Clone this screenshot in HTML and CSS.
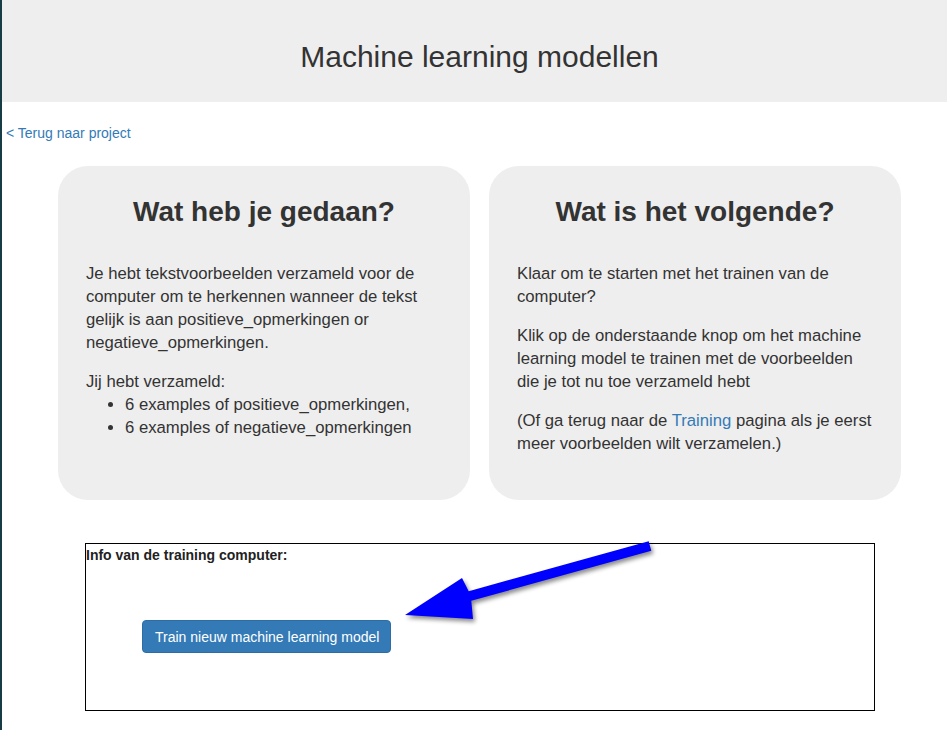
FILE: index.html
```html
<!DOCTYPE html>
<html lang="nl">
<head>
<meta charset="utf-8">
<title>Machine learning modellen</title>
<link rel="stylesheet" href="styles.css">
</head>
<body>
<header class="page-header">
  <h1 class="page-title">Machine learning modellen</h1>
</header>
<nav class="back-nav">
  <a class="back-link" href="#">&lt; Terug naar project</a>
</nav>
<main class="content">
  <section class="cards">
    <div class="card">
      <h2 class="card-title">Wat heb je gedaan?</h2>
      <p class="card-text">Je hebt tekstvoorbeelden verzameld voor de computer om te herkennen wanneer de tekst gelijk is aan positieve_opmerkingen or negatieve_opmerkingen.</p>
      <p class="card-text card-text-tight">Jij hebt verzameld:</p>
      <ul class="card-list">
        <li>6 examples of positieve_opmerkingen,</li>
        <li>6 examples of negatieve_opmerkingen</li>
      </ul>
    </div>
    <div class="card">
      <h2 class="card-title">Wat is het volgende?</h2>
      <p class="card-text">Klaar om te starten met het trainen van de computer?</p>
      <p class="card-text">Klik op de onderstaande knop om het machine learning model te trainen met de voorbeelden die je tot nu toe verzameld hebt</p>
      <p class="card-text">(Of ga terug naar de <a class="inline-link" href="#">Training</a> pagina als je eerst meer voorbeelden wilt verzamelen.)</p>
    </div>
  </section>
  <section class="info-box">
    <div class="info-label">Info van de training computer:</div>
    <div class="info-actions">
      <button class="train-btn" type="button">Train nieuw machine learning model</button>
    </div>
    <svg class="arrow" width="270" height="100" viewBox="390 530 270 100" aria-hidden="true">
      <polygon points="405,615 462,578 468.7,591.2 648.7,541.2 651.3,550.8 471.3,600.8 473,619" fill="#0000ff"/>
    </svg>
  </section>
</main>
</body>
</html>
```

FILE: styles.css
```css
html, body {
  margin: 0;
  padding: 0;
}
body {
  font-family: "Liberation Sans", Arial, Helvetica, sans-serif;
  color: #333;
  background: #fff;
  border-left: 2px solid #173c46;
  min-height: 730px;
  box-sizing: border-box;
}
.page-header {
  background: #eeeeee;
  height: 102px;
  display: flex;
  align-items: center;
  justify-content: center;
  padding-left: 10px;
  padding-top: 10px;
  box-sizing: border-box;
}
.page-title {
  margin: 0;
  font-size: 30px;
  font-weight: 400;
  line-height: 33px;
  color: #333;
}
.back-nav {
  padding: 21px 0 0 4px;
  height: 43px;
  box-sizing: border-box;
}
.back-link {
  font-size: 14px;
  line-height: 20px;
  color: #337ab7;
  text-decoration: none;
}
.content {
  display: flex;
  flex-direction: column;
}
.cards {
  display: flex;
  gap: 19px;
  padding-left: 56px;
  margin-top: 21px;
}
.card {
  width: 412px;
  height: 334px;
  box-sizing: border-box;
  background: #eeeeee;
  border-radius: 30px;
  padding: 30px 24px 0 28px;
}
.card-title {
  margin: 0 0 35px 0;
  padding-right: 4px;
  font-size: 28px;
  line-height: 31px;
  font-weight: 700;
  text-align: center;
  color: #333;
}
.card-text {
  margin: 0 0 16px 0;
  font-size: 16.7px;
  line-height: 23px;
}
.card-text-tight {
  margin-bottom: 0;
}
.card-list {
  margin: 0;
  padding-left: 39px;
  font-size: 16.7px;
  line-height: 23px;
}
.inline-link {
  color: #337ab7;
  text-decoration: none;
}
.info-box {
  position: relative;
  margin: 43px 0 0 83px;
  width: 790px;
  height: 168px;
  box-sizing: border-box;
  border: 1px solid #000;
}
.info-label {
  font-size: 14px;
  font-weight: 700;
  line-height: 18px;
  padding: 2px 0 0 0;
  color: #222;
}
.info-actions {
  display: flex;
  padding: 56px 0 0 56px;
}
.train-btn {
  font-family: "Liberation Sans", Arial, Helvetica, sans-serif;
  font-size: 14px;
  line-height: 20px;
  color: #fff;
  background: #337ab7;
  border: 1px solid #2e6da4;
  border-radius: 4px;
  padding: 6px 12px;
  width: 249px;
  height: 33px;
  box-sizing: border-box;
  white-space: nowrap;
  cursor: pointer;
}
.arrow {
  position: absolute;
  left: 304px;
  top: -14px;
  overflow: visible;
  filter: drop-shadow(2px 3px 2px rgba(0, 0, 0, 0.45));
}
```
